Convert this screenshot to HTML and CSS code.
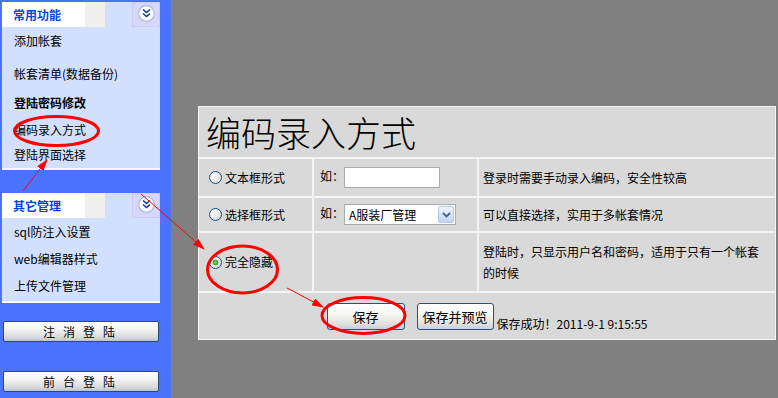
FILE: index.html
```html
<!DOCTYPE html>
<html lang="zh-CN">
<head>
  <meta charset="UTF-8">
  <meta name="viewport" content="width=device-width, initial-scale=1.0">
  <title>编码录入方式</title>
  <link rel="stylesheet" href="styles.css">
</head>
<body>
  <div class="page">
    <aside class="side">
      <div class="box">
        <div class="box-head">
          <span class="box-title">常用功能</span>
          <span class="head-gap"></span>
          <span class="head-fill"></span>
          <span class="head-icon">
            <svg width="17" height="17" viewBox="0 0 17 17">
              <circle cx="8.5" cy="8.5" r="7.8" fill="#fff" stroke="#a9bde0" stroke-width="1.2"/>
              <path d="M5 4.5 L8.5 7.5 L12 4.5 M5 8.5 L8.5 11.5 L12 8.5" fill="none" stroke="#0b3c94" stroke-width="1.6"/>
            </svg>
          </span>
        </div>
        <ul class="menu menu-main">
          <li>添加帐套</li>
          <li>帐套清单(数据备份)</li>
          <li class="current">登陆密码修改</li>
          <li>编码录入方式</li>
          <li>登陆界面选择</li>
        </ul>
      </div>
      <div class="box">
        <div class="box-head">
          <span class="box-title">其它管理</span>
          <span class="head-gap"></span>
          <span class="head-fill"></span>
          <span class="head-icon">
            <svg width="17" height="17" viewBox="0 0 17 17">
              <circle cx="8.5" cy="8.5" r="7.8" fill="#fff" stroke="#a9bde0" stroke-width="1.2"/>
              <path d="M5 4.5 L8.5 7.5 L12 4.5 M5 8.5 L8.5 11.5 L12 8.5" fill="none" stroke="#0b3c94" stroke-width="1.6"/>
            </svg>
          </span>
        </div>
        <ul class="menu menu-more">
          <li>sql防注入设置</li>
          <li>web编辑器样式</li>
          <li>上传文件管理</li>
        </ul>
      </div>
      <button class="side-btn" type="button">注消登陆</button>
      <button class="side-btn side-btn-last" type="button">前台登陆</button>
    </aside>

    <main class="main">
      <form class="form">
        <table class="panel">
          <colgroup>
            <col class="col-opt">
            <col class="col-demo">
            <col class="col-note">
          </colgroup>
          <tr class="row-title">
            <td colspan="3" class="title">编码录入方式</td>
          </tr>
          <tr class="row-text">
            <td class="opt"><label><input type="radio" name="mode">文本框形式</label></td>
            <td class="demo">如：<input class="code-input" type="text"></td>
            <td class="note">登录时需要手动录入编码，安全性较高</td>
          </tr>
          <tr class="row-select">
            <td class="opt"><label><input type="radio" name="mode">选择框形式</label></td>
            <td class="demo">如：<span class="combo"><span class="combo-text">A服装厂管理</span><span class="combo-btn"><svg width="9" height="6" viewBox="0 0 9 6"><path d="M1 1 L4.5 4.5 L8 1" fill="none" stroke="#4d6185" stroke-width="1.8"/></svg></span></span></td>
            <td class="note">可以直接选择，实用于多帐套情况</td>
          </tr>
          <tr class="row-hide">
            <td class="opt"><label><input type="radio" name="mode" checked>完全隐藏</label></td>
            <td class="demo"></td>
            <td class="note note-wrap">登陆时，只显示用户名和密码，适用于只有一个帐套的时候</td>
          </tr>
          <tr class="row-actions">
            <td colspan="3">
              <div class="actions">
                <button class="btn btn-save" type="button">保存</button>
                <button class="btn btn-preview" type="button">保存并预览</button>
                <span class="status">保存成功！2011-9-1 9:15:55</span>
              </div>
            </td>
          </tr>
        </table>
      </form>
    </main>
  </div>

  <!-- red hand-drawn marks over the screenshot -->
  <svg class="marks" width="778" height="398" viewBox="0 0 778 398">
    <defs>
      <marker id="tip" viewBox="0 0 12 8" markerWidth="12" markerHeight="8" refX="11" refY="4" orient="auto" markerUnits="userSpaceOnUse">
        <path d="M0 0 L12 4 L0 8 Z" fill="#f00"/>
      </marker>
    </defs>
    <g fill="none" stroke="#f00">
      <ellipse cx="56.5" cy="131" rx="42" ry="14.5" stroke-width="3"/>
      <ellipse cx="242.5" cy="269.5" rx="35" ry="23.5" stroke-width="3"/>
      <ellipse cx="363.5" cy="315.5" rx="41.5" ry="18" stroke-width="3"/>
      <line x1="23" y1="191" x2="47" y2="160" marker-end="url(#tip)"/>
      <line x1="141" y1="194" x2="204" y2="249" marker-end="url(#tip)"/>
      <line x1="287" y1="288" x2="323" y2="307" marker-end="url(#tip)"/>
    </g>
  </svg>
</body>
</html>
```

FILE: styles.css
```css
html, body {
  margin: 0;
  height: 100%;
  overflow: hidden;
}
body {
  font: 12px/16px "Noto Sans CJK SC", "Liberation Sans", sans-serif;
  color: #000;
  background: #808080;
}
.page {
  display: flex;
  height: 100%;
}

/* sidebar */
.side {
  flex: none;
  width: 158px;
  padding: 2px 11px 0 2px;
  background: #4b73ff;
}
.box {
  background: #d3e0fd;
  border-bottom: 2px solid #fff;
}
.box + .box {
  margin-top: 23px;
}
.box-head {
  display: flex;
  height: 25px;
}
.box-title {
  width: 72px;
  padding-left: 11px;
  background: #fff;
  color: #0046d5;
  font-weight: bold;
  line-height: 25px;
}
.head-gap {
  width: 20px;
  background: #f0f0f0;
}
.head-fill {
  flex: 1;
}
.head-icon {
  display: flex;
  align-items: center;
  justify-content: center;
  box-sizing: border-box;
  width: 28px;
  padding-bottom: 2px;
  background: #d7d7fb;
  border: 1px solid #cbcbf3;
}
.menu {
  margin: 0;
  padding: 0 0 0 12px;
  list-style: none;
}
.menu-main {
  padding-top: 6px;
  padding-bottom: 5px;
}
.menu-main li:nth-child(2) { margin-top: 17px; }
.menu-main li:nth-child(3) { margin-top: 13px; }
.menu-main li:nth-child(4) { margin-top: 11px; }
.menu-main li:nth-child(5) { margin-top: 9px; }
.menu-more {
  padding-bottom: 2px;
}
.menu-more li {
  line-height: 27px;
}
.current {
  font-weight: bold;
}
.side-btn {
  display: block;
  box-sizing: border-box;
  width: 156px;
  height: 21px;
  margin: 18px 0 0 1px;
  padding: 0 0 0 4px;
  border: 1px solid #2a4a72;
  border-radius: 2px;
  background: linear-gradient(#fff 0%, #f6f6f6 35%, #dadada 80%, #b9c3d3 100%);
  font: 12px/19px "Noto Sans CJK SC", sans-serif;
  letter-spacing: 8px;
  text-align: center;
  color: #000;
}
.side-btn-last {
  margin-top: 29px;
}

/* main area */
.main {
  flex: 1;
  padding: 106px 0 0 27px;
}
.form {
  margin: 0;
}
.panel {
  width: 578px;
  table-layout: fixed;
  border-collapse: separate;
  border-spacing: 0;
  background: #d9d9d9;
}
.col-opt { width: 115px; }
.col-demo { width: 165px; }
.col-note { width: 298px; }
.panel td {
  padding: 0;
  border: 1px solid #f4f4f4;
}
.row-title { height: 52px; }
.row-text { height: 39px; }
.row-select { height: 35px; }
.row-hide { height: 60px; }
.row-actions { height: 48px; }
.panel .title {
  padding-left: 7px;
  font-size: 35px;
  font-weight: 300;
  line-height: 44px;
}
.panel .opt {
  padding-left: 10px;
}
.opt label {
  display: flex;
  align-items: center;
}
.opt input {
  appearance: none;
  flex: none;
  width: 13px;
  height: 13px;
  margin: 0 3px 0 0;
  border: 1px solid #1d5281;
  border-radius: 50%;
  background: radial-gradient(circle at 35% 35%, #fff 0, #ececec 45%, #c6cad0 100%);
}
.opt input:checked {
  background:
    radial-gradient(circle, #7be05a 0, #22a322 2.5px, transparent 3.2px),
    radial-gradient(circle at 35% 35%, #fff 0, #ececec 45%, #c6cad0 100%);
}
.panel .demo {
  padding-left: 6px;
}
.code-input {
  box-sizing: border-box;
  width: 96px;
  height: 21px;
  margin: 0;
  padding: 0 3px;
  border: 1px solid #a5acb2;
  vertical-align: middle;
}
.combo {
  display: inline-flex;
  box-sizing: border-box;
  width: 112px;
  height: 21px;
  border: 1px solid #a5acb2;
  background: #fff;
  vertical-align: middle;
}
.combo-text {
  flex: 1;
  padding-left: 4px;
  line-height: 19px;
}
.combo-btn {
  display: flex;
  align-items: center;
  justify-content: center;
  box-sizing: border-box;
  width: 16px;
  margin: 1px;
  border: 1px solid #b5c8ee;
  border-radius: 2px;
  background: linear-gradient(#eef3ff, #c2d4f7);
}
.panel .note {
  padding: 0 10px 0 4px;
}
.note-wrap {
  line-height: 21px;
}
.actions {
  display: flex;
  justify-content: center;
  align-items: center;
}
.btn {
  box-sizing: border-box;
  height: 27px;
  margin: 0;
  padding: 0;
  border: 1px solid #24527c;
  border-radius: 3px;
  background: linear-gradient(#fff 0%, #f7f7f5 40%, #e2e0da 80%, #c3d0e6 100%);
  font: 13px/25px "Noto Sans CJK SC", sans-serif;
  color: #000;
}
.btn-save {
  width: 78px;
}
.btn-preview {
  width: 77px;
  margin-left: 12px;
}
.status {
  align-self: flex-end;
  margin-left: 3px;
  line-height: 12px;
  white-space: nowrap;
}

/* annotation overlay */
.marks {
  position: absolute;
  left: 0;
  top: 0;
  pointer-events: none;
}
```
